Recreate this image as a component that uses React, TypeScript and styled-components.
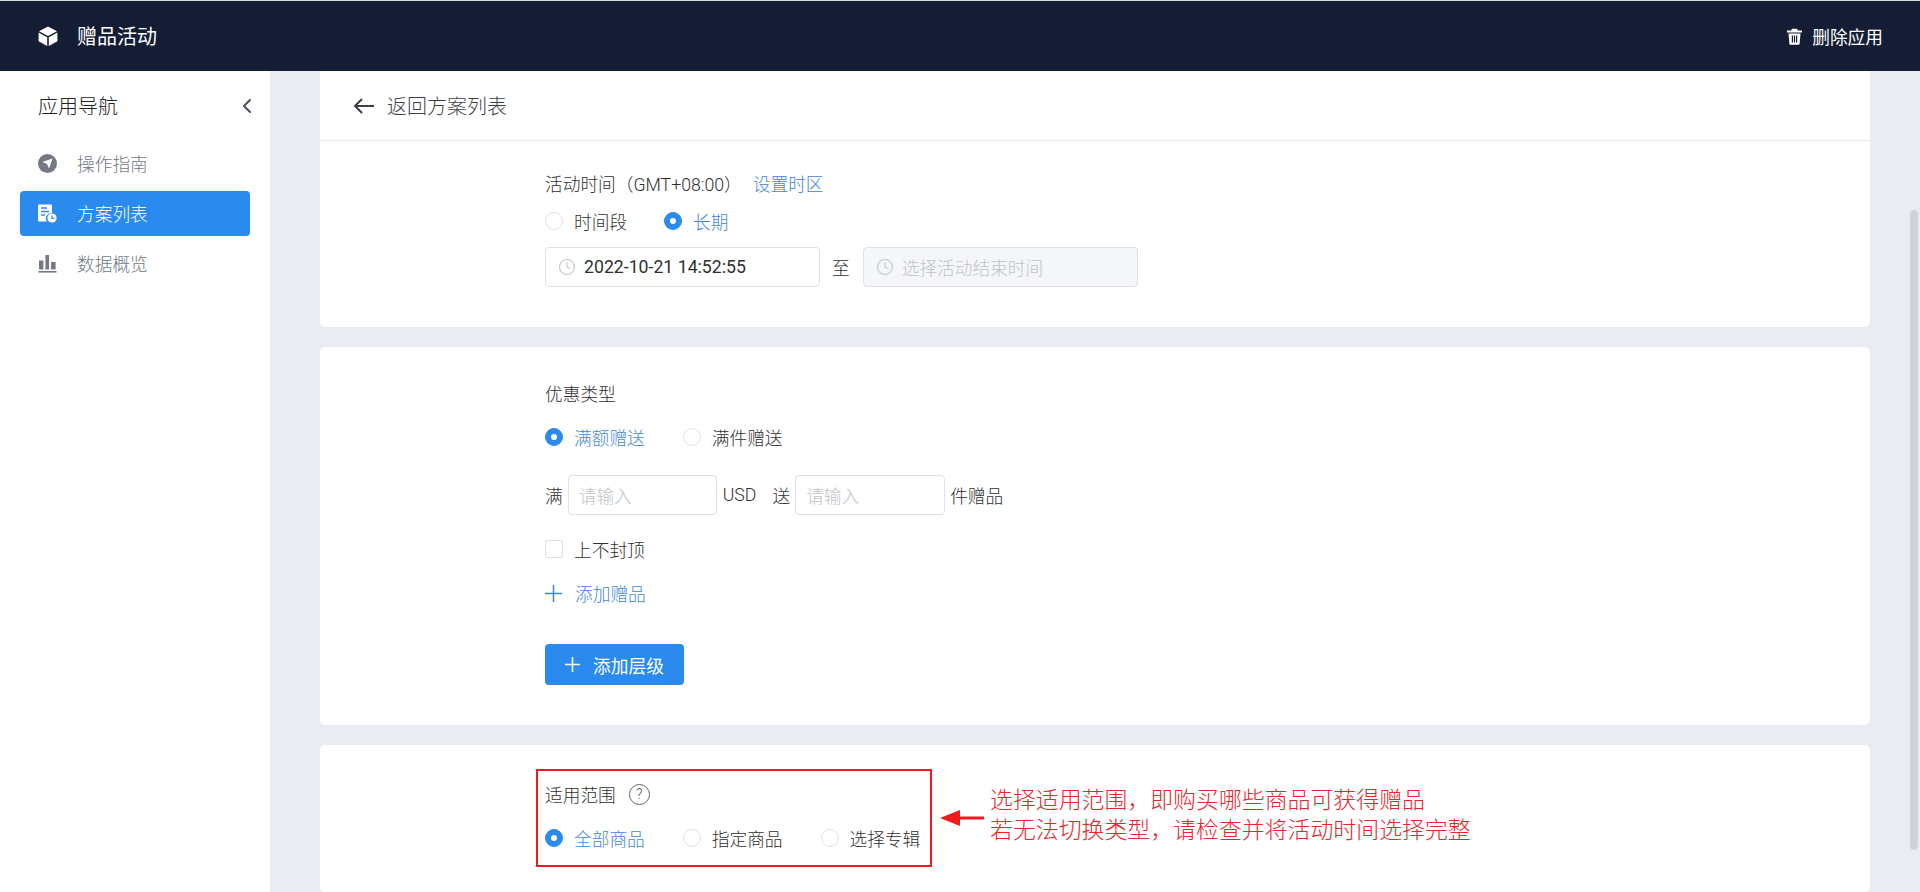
import React from "react";
import styled, { createGlobalStyle } from "styled-components";
import { ChevronLeft, Clock } from "lucide-react";

const Global = createGlobalStyle`
  html, body { margin: 0; padding: 0; height: 892px; overflow: hidden; background: #e9edf2; }
  #root { height: 892px; }
  * { box-sizing: border-box; }
`;

const FONT = `Roboto, "Noto Sans CJK SC", sans-serif`;
const BLUE = "#2b8aee";
const LINK = "#3f87d8";
const TEXT = "#2f2f2f";

const Page = styled.div`
  height: 892px;
  display: flex;
  flex-direction: column;
  font-family: ${FONT};
  font-weight: 300;
  font-size: 17.7px;
  color: ${TEXT};
  background: #e9edf2;
  border-top: 1px solid #d8dce3;
  position: relative;
  overflow: hidden;
`;

const Header = styled.header`
  height: 70px;
  flex: none;
  background: #141d33;
  color: #fff;
  display: flex;
  align-items: center;
  justify-content: space-between;
  padding: 0 37px;
`;

const Brand = styled.div`
  display: flex;
  align-items: center;
  gap: 18px;
  font-size: 20px;
  font-weight: 400;
`;

const BrandLabel = styled.span`
  margin-top: -2px;
`;

const HeaderAction = styled.div`
  display: flex;
  align-items: center;
  gap: 9px;
  font-size: 17.7px;
  font-weight: 400;
`;

const Body = styled.div`
  flex: 1;
  display: flex;
  min-height: 0;
`;

const Sidebar = styled.aside`
  width: 270px;
  flex: none;
  background: #fff;
  padding: 0 20px;
`;

const SideTitle = styled.div`
  height: 70px;
  display: flex;
  align-items: center;
  justify-content: space-between;
  padding: 0 0 2px 18px;
  font-size: 20px;
  font-weight: 300;
  color: #222;
`;

const Collapse = styled(ChevronLeft)`
  margin-right: -9px;
  color: #4a4f5e;
  margin-top: 2px;
`;

const NavItem = styled.div<{ $active?: boolean }>`
  height: 45px;
  margin-bottom: 5px;
  display: flex;
  align-items: center;
  gap: 20px;
  padding-left: 18px;
  border-radius: 4px;
  background: ${(p) => (p.$active ? BLUE : "transparent")};
  color: ${(p) => (p.$active ? "#fff" : "#747982")};
`;

const NavLabel = styled.span`
  margin-top: -2px;
`;

const Main = styled.main`
  flex: 1;
  padding: 0 50px;
  display: flex;
  flex-direction: column;
  gap: 20px;
  overflow: hidden;
`;

const Card = styled.section<{ $flatTop?: boolean }>`
  background: #fff;
  border-radius: ${(p) => (p.$flatTop ? "0 0 5px 5px" : "5px")};
  flex: none;
`;

const BackBar = styled.div`
  height: 70px;
  border-bottom: 1px solid #e9ebef;
  display: flex;
  align-items: center;
  gap: 13px;
  padding-left: 33px;
  font-size: 20px;
  color: #3c3f47;
`;

const Section = styled.div<{ $h: number; $top: number }>`
  height: ${(p) => p.$h}px;
  padding: ${(p) => p.$top}px 0 0 225px;
`;

const Line = styled.div<{ $h?: number; $mb?: number }>`
  display: flex;
  align-items: center;
  height: ${(p) => p.$h ?? 24}px;
  margin-bottom: ${(p) => p.$mb ?? 0}px;
  white-space: nowrap;
`;

const Link = styled.a`
  color: ${LINK};
  margin-left: 11px;
`;

const RadioWrap = styled.label<{ $on?: boolean; $gap?: number }>`
  display: flex;
  align-items: center;
  gap: 11px;
  margin-right: ${(p) => p.$gap ?? 28}px;
  color: ${(p) => (p.$on ? LINK : TEXT)};
`;

const RadioDot = styled.span<{ $on?: boolean }>`
  width: 18px;
  height: 18px;
  border-radius: 50%;
  flex: none;
  background: ${(p) => (p.$on ? BLUE : "#fff")};
  border: 1px solid ${(p) => (p.$on ? BLUE : "#dfe1e6")};
  display: flex;
  align-items: center;
  justify-content: center;
  &::after {
    content: "";
    display: ${(p) => (p.$on ? "block" : "none")};
    width: 6px;
    height: 6px;
    border-radius: 50%;
    background: #fff;
  }
`;

const Field = styled.div<{ $w: number; $disabled?: boolean; $pad?: number }>`
  width: ${(p) => p.$w}px;
  height: 40px;
  flex: none;
  border: 1px solid #dfe1e6;
  border-radius: 4px;
  background: ${(p) => (p.$disabled ? "#f5f6f9" : "#fff")};
  display: flex;
  align-items: center;
  gap: 8px;
  padding-left: ${(p) => p.$pad ?? 12}px;
  color: ${TEXT};
  font-weight: 400;
`;

const Placeholder = styled.span`
  color: #c0c3c9;
  font-weight: 300;
`;

const ClockIcon = styled(Clock)`
  color: #c4c7cd;
  flex: none;
`;

const Joiner = styled.span<{ $mx?: string }>`
  margin: ${(p) => p.$mx ?? "0 13px 0 12px"};
`;

const CheckBox = styled.span`
  width: 18px;
  height: 18px;
  border: 1px solid #dfe1e6;
  border-radius: 2px;
  margin-right: 11px;
`;

const AddLink = styled.div`
  display: flex;
  align-items: center;
  gap: 13px;
  color: ${LINK};
`;

const PlusMark = styled.svg<{ $s: number }>`
  width: ${(p) => p.$s}px;
  height: ${(p) => p.$s}px;
  flex: none;
  stroke: currentColor;
  stroke-width: 1.5px;
`;

const PrimaryButton = styled.button`
  width: 139px;
  height: 41px;
  padding: 0;
  border: 0;
  border-radius: 4px;
  background: ${BLUE};
  color: #fff;
  font: inherit;
  font-weight: 400;
  display: flex;
  align-items: center;
  justify-content: center;
  gap: 13px;
`;

const ScopeCard = styled(Card)`
  height: 147px;
  display: flex;
  align-items: center;
  padding: 0 0 0 216px;
  border-radius: 5px;
`;

const RedBox = styled.div`
  width: 396px;
  height: 98px;
  margin-top: -1px;
  border: 2px solid #f01a1f;
  padding: 7px 0 0 7px;
`;

const Help = styled.span`
  width: 21px;
  height: 21px;
  margin-left: 13px;
  border: 1px solid #666;
  border-radius: 50%;
  font-size: 14px;
  display: flex;
  align-items: center;
  justify-content: center;
  color: #555;
`;

const Arrow = styled.svg`
  width: 44px;
  height: 16px;
  margin: -1px 6px 0 8px;
  flex: none;
`;

const Note = styled.div`
  margin-top: -6px;
  color: #e8252b;
  font-family: "Liberation Serif", "Noto Sans CJK SC", serif;
  font-size: 22.9px;
  font-weight: 300;
  line-height: 29.5px;
  white-space: nowrap;
`;

const Thumb = styled.div`
  position: absolute;
  left: 1910px;
  top: 209px;
  width: 8px;
  height: 640px;
  border-radius: 4px;
  background: #cfd2d9;
`;

const Radio = ({ on, gap, children }: { on?: boolean; gap?: number; children: React.ReactNode }) => (
  <RadioWrap $on={on} $gap={gap}>
    <RadioDot $on={on} />
    {children}
  </RadioWrap>
);

const Plus = ({ s }: { s: number }) => (
  <PlusMark $s={s} viewBox={`0 0 ${s} ${s}`} fill="none">
    <path d={`M${s / 2} 0V${s}M0 ${s / 2}H${s}`} />
  </PlusMark>
);

const CubeIcon = () => (
  <svg width="22" height="22" viewBox="0 0 22 22">
    <path d="M11 1.5 20 6.2 11 11 2 6.2Z" fill="#fff" />
    <path d="M1.6 7.6 10.2 12.2V21L1.6 16.3Z" fill="#fff" />
    <path d="M20.4 7.6 11.8 12.2V21L20.4 16.3Z" fill="#fff" />
  </svg>
);

const TrashIcon = () => (
  <svg width="17" height="17" viewBox="0 0 17 17">
    <path d="M6 0.8h5l0.8 1.7H16v2H1v-2h4.2Z" fill="#fff" />
    <path
      fillRule="evenodd"
      d="M2.5 5.6h12l-0.9 10.2a1 1 0 0 1-1 .9H4.4a1 1 0 0 1-1-.9ZM5.8 7.5v7h1.2v-7ZM7.9 7.5v7h1.2v-7ZM10 7.5v7h1.2v-7Z"
      fill="#fff"
    />
  </svg>
);

const BackArrow = () => (
  <svg width="21" height="16" viewBox="0 0 21 16" fill="none" stroke="currentColor" strokeWidth="2">
    <path d="M21 8H2M9 1 2 8l7 7" />
  </svg>
);

const CompassIcon = () => (
  <svg width="19" height="19" viewBox="0 0 19 19">
    <circle cx="9.5" cy="9.5" r="9.5" fill="currentColor" />
    <path d="M14.6 4.4 11 14.6 9 10 4.4 8Z" fill="#fff" />
  </svg>
);

const ReportIcon = () => (
  <svg width="19" height="19" viewBox="0 0 19 19">
    <path d="M1 0.5h12a1 1 0 0 1 1 1v8a5 5 0 0 0-5 8H1a1 1 0 0 1-1-1v-15a1 1 0 0 1 1-1Z" fill="#fff" />
    <path d="M3 4h6M3 7.5h8M3 11h4" stroke={BLUE} strokeWidth="1.3" />
    <circle cx="14" cy="14" r="4.6" fill="#fff" />
    <path d="M14 11.5V14.3h2.2" stroke={BLUE} strokeWidth="1.2" fill="none" />
  </svg>
);

const BarsIcon = () => (
  <svg width="19" height="19" viewBox="0 0 19 19" fill="currentColor">
    <rect x="1" y="6.5" width="4.4" height="9" />
    <rect x="7.4" y="1" width="3.6" height="14.5" />
    <rect x="13" y="8" width="4.6" height="7.5" />
    <rect x="0.5" y="17" width="18" height="1.6" />
  </svg>
);

export default function App() {
  return (
    <Page>
      <Global />
      <Header>
        <Brand>
          <CubeIcon />
          <BrandLabel>赠品活动</BrandLabel>
        </Brand>
        <HeaderAction>
          <TrashIcon />
          删除应用
        </HeaderAction>
      </Header>
      <Body>
        <Sidebar>
          <SideTitle>
            应用导航
            <Collapse size={24} strokeWidth={2} />
          </SideTitle>
          <NavItem>
            <CompassIcon />
            <NavLabel>操作指南</NavLabel>
          </NavItem>
          <NavItem $active>
            <ReportIcon />
            <NavLabel>方案列表</NavLabel>
          </NavItem>
          <NavItem>
            <BarsIcon />
            <NavLabel>数据概览</NavLabel>
          </NavItem>
        </Sidebar>
        <Main>
          <Card $flatTop>
            <BackBar>
              <BackArrow />
              返回方案列表
            </BackBar>
            <Section $h={186} $top={30}>
              <Line $mb={14}>
                {"活动时间\uFF08GMT+08:00\uFF09"}
                <Link>设置时区</Link>
              </Line>
              <Line $mb={14}>
                <Radio gap={37}>时间段</Radio>
                <Radio on>长期</Radio>
              </Line>
              <Line $h={40}>
                <Field $w={275}>
                  <ClockIcon size={18} strokeWidth={1.5} />
                  2022-10-21 14:52:55
                </Field>
                <Joiner $mx="0 13px 0 12px">至</Joiner>
                <Field $w={275} $disabled>
                  <ClockIcon size={18} strokeWidth={1.5} />
                  <Placeholder>选择活动结束时间</Placeholder>
                </Field>
              </Line>
            </Section>
          </Card>
          <Card>
            <Section $h={378} $top={34}>
              <Line $mb={20}>优惠类型</Line>
              <Line $mb={26}>
                <Radio on gap={38}>满额赠送</Radio>
                <Radio>满件赠送</Radio>
              </Line>
              <Line $h={40} $mb={22}>
                满
                <Joiner $mx="0 0 0 5px" />
                <Field $w={149} $pad={10}>
                  <Placeholder>请输入</Placeholder>
                </Field>
                <Joiner $mx="0 16px 0 6px">USD</Joiner>
                送
                <Joiner $mx="0 0 0 5px" />
                <Field $w={150} $pad={10}>
                  <Placeholder>请输入</Placeholder>
                </Field>
                <Joiner $mx="0 0 0 5px">件赠品</Joiner>
              </Line>
              <Line $mb={20}>
                <CheckBox />
                上不封顶
              </Line>
              <Line $mb={39}>
                <AddLink>
                  <Plus s={17} />
                  添加赠品
                </AddLink>
              </Line>
              <PrimaryButton>
                <Plus s={15} />
                添加层级
              </PrimaryButton>
            </Section>
          </Card>
          <ScopeCard>
            <RedBox>
              <Line $h={32} $mb={16}>
                适用范围
                <Help>?</Help>
              </Line>
              <Line>
                <Radio on gap={38}>全部商品</Radio>
                <Radio gap={38}>指定商品</Radio>
                <Radio gap={0}>选择专辑</Radio>
              </Line>
            </RedBox>
            <Arrow viewBox="0 0 44 16">
              <path d="M0 8 20 0V6.5H44V9.5H20V16Z" fill="#f01a1f" />
            </Arrow>
            <Note>
              {"选择适用范围\uFF0C即购买哪些商品可获得赠品"}
              <br />
              {"若无法切换类型\uFF0C请检查并将活动时间选择完整"}
            </Note>
          </ScopeCard>
        </Main>
      </Body>
      <Thumb />
    </Page>
  );
}
